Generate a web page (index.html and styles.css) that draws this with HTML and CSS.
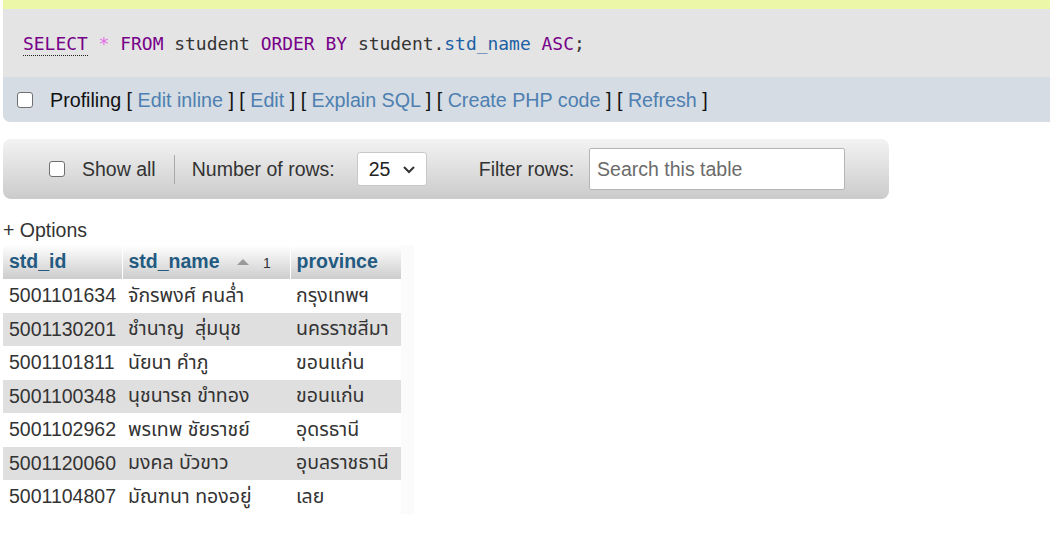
FILE: index.html
```html
<!DOCTYPE html>
<html lang="th">
<head>
<meta charset="utf-8">
<title>student</title>
<link rel="stylesheet" href="styles.css">
</head>
<body>
<div class="page">
  <div class="notice"></div>
  <div class="sql">
    <code><span class="kw doc">SELECT</span> <span class="op">*</span> <span class="kw">FROM</span> <span class="id">student</span> <span class="kw">ORDER</span> <span class="kw">BY</span> <span class="id">student.</span><span class="var">std_name</span> <span class="kw">ASC</span><span class="id">;</span></code>
  </div>
  <div class="tools">
    <span class="check"></span>
    <span class="toolstext">Profiling [ <a>Edit inline</a> ] [ <a>Edit</a> ] [ <a>Explain SQL</a> ] [ <a>Create PHP code</a> ] [ <a>Refresh</a> ]</span>
  </div>

  <div class="navbar">
    <span class="check"></span>
    <span class="lbl showall">Show all</span>
    <span class="sep"></span>
    <span class="lbl">Number of rows:</span>
    <div class="select"><span>25</span><svg width="14" height="9" viewBox="0 0 14 9"><path d="M2 2 L7 7 L12 2" fill="none" stroke="#333" stroke-width="2"/></svg></div>
    <span class="lbl filter">Filter rows:</span>
    <input class="search" type="text" placeholder="Search this table">
  </div>

  <div class="options">+ Options</div>

  <div class="tablewrap">
    <table class="data">
      <thead>
        <tr>
          <th class="c1">std_id</th>
          <th class="c2">std_name <span class="sorticon"></span><span class="sortnum">1</span></th>
          <th class="c3">province</th>
        </tr>
      </thead>
      <tbody>
        <tr><td>5001101634</td><td>จักรพงศ์ คนล่ำ</td><td>กรุงเทพฯ</td></tr>
        <tr><td>5001130201</td><td>ชำนาญ&nbsp; สุ่มนุช</td><td>นครราชสีมา</td></tr>
        <tr><td>5001101811</td><td>นัยนา คำภู</td><td>ขอนแก่น</td></tr>
        <tr><td>5001100348</td><td>นุชนารถ ขำทอง</td><td>ขอนแก่น</td></tr>
        <tr><td>5001102962</td><td>พรเทพ ชัยราชย์</td><td>อุดรธานี</td></tr>
        <tr><td>5001120060</td><td>มงคล บัวขาว</td><td>อุบลราชธานี</td></tr>
        <tr><td>5001104807</td><td>มัณฑนา ทองอยู่</td><td>เลย</td></tr>
      </tbody>
    </table>
  </div>
</div>
</body>
</html>
```

FILE: styles.css
```css
html, body {
  margin: 0;
  padding: 0;
  background: #fff;
}
body {
  font-family: "Liberation Sans", Arial, "Noto Sans", sans-serif;
  font-size: 19.5px;
  color: #333;
}
.page {
  padding-left: 3px;
}
.notice {
  height: 9px;
  background: #edf7a8;
}
.sql {
  height: 68px;
  background: #e4e4e4;
  padding-left: 20px;
  display: flex;
  align-items: center;
  box-sizing: border-box;
  padding-top: 1px;
}
.sql code {
  font-family: "DejaVu Sans Mono", "Liberation Mono", monospace;
  font-size: 17.95px;
  color: #333;
  white-space: pre;
  line-height: 24px;
}
.kw { color: #770088; }
.doc {
  border-bottom: 1px dotted #222;
  padding-bottom: 1px;
}
.op { color: #e46ee4; }
.id { color: #333; }
.var { color: #1c5fa3; }
.tools {
  height: 45px;
  background: #d5dce3;
  border-radius: 0 0 0 7px;
  display: flex;
  align-items: center;
  padding-left: 14px;
}
.check {
  display: inline-block;
  width: 16px;
  height: 16px;
  box-sizing: border-box;
  border: 1px solid #6f6f6f;
  border-radius: 3px;
  background: #fff;
  flex: none;
}
.toolstext {
  margin-left: 17px;
  color: #111;
  font-size: 19.7px;
  padding-top: 2px;
}
.toolstext a {
  color: #4e7fb1;
  text-decoration: none;
}
.navbar {
  margin-top: 17px;
  width: 886px;
  height: 60px;
  box-sizing: border-box;
  border-radius: 8px;
  background: linear-gradient(#f3f3f3, #cbcbcb);
  display: flex;
  align-items: center;
  padding-left: 46px;
}
.lbl {
  color: #333;
  white-space: nowrap;
}
.showall { margin-left: 17px; }
.sep {
  width: 1px;
  height: 29px;
  background: #a9a9a9;
  margin: 0 17px 0 18px;
  flex: none;
}
.select {
  margin-left: 22px;
  width: 70px;
  height: 34px;
  box-sizing: border-box;
  background: #fff;
  border: 1px solid #c9c9c9;
  border-radius: 3px;
  display: flex;
  align-items: center;
  justify-content: space-between;
  padding: 0 10px 0 11px;
  color: #222;
}
.filter { margin-left: 52px; }
.search {
  margin-left: 15px;
  width: 256px;
  height: 42px;
  box-sizing: border-box;
  border: 1px solid #b5b5b5;
  border-radius: 2px;
  background: #fff;
  padding: 0 7px;
  font-family: "Liberation Sans", Arial, sans-serif;
  font-size: 19.5px;
  color: #333;
  outline: none;
}
.search::placeholder {
  color: #6b6b6b;
}
.options {
  margin-top: 19px;
  height: 27px;
  line-height: 24px;
  color: #333;
}
.tablewrap {
  display: inline-block;
  background: #fbfbfb;
  padding-right: 13px;
  vertical-align: top;
}
.data {
  border-collapse: collapse;
  border-spacing: 0;
}
.data th {
  background: linear-gradient(#ffffff, #cccccc);
  color: #235a81;
  font-weight: bold;
  text-align: left;
  padding: 0 6px 1px;
  height: 34px;
  box-sizing: border-box;
  border-right: 1px solid #fff;
  white-space: nowrap;
}
.data th.c3 { border-right: none; }
.data .c1 { width: 118px; }
.data .c2 { width: 168px; }
.data .c3 { width: 111px; }
.sorticon {
  display: inline-block;
  width: 0;
  height: 0;
  border-left: 6px solid transparent;
  border-right: 6px solid transparent;
  border-bottom: 6px solid #9a9a9a;
  margin-left: 12px;
  vertical-align: 3px;
}
.sortnum {
  font-size: 14px;
  font-weight: normal;
  color: #333;
  margin-left: 14px;
}
.data td {
  padding: 0 6px;
  height: 33.5px;
  box-sizing: border-box;
  white-space: nowrap;
  color: #333;
  font-family: "Liberation Sans", Arial, "Noto Sans Thai", "Noto Sans", sans-serif;
}
.data tbody tr:nth-child(odd) td { background: #ffffff; }
.data tbody tr:nth-child(even) td { background: #dfdfdf; }
```
